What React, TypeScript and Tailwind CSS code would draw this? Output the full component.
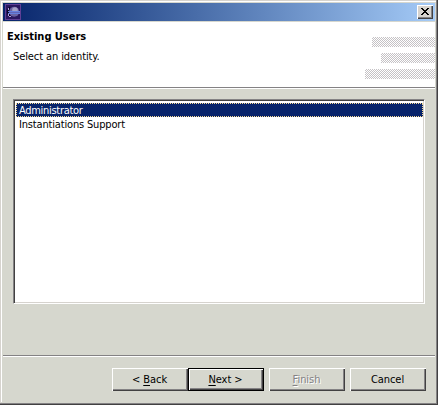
import type { ReactNode } from "react";

const face = "font-['DejaVu_Sans_Condensed','DejaVu_Sans',sans-serif] [font-stretch:condensed]";

function EclipseIcon() {
  return (
    <svg width="16" height="16" viewBox="0 0 16 16">
      <rect width="16" height="16" fill="#5f3f95" />
      <rect x="1" y="1" width="14" height="14" fill="#2a1860" />
      <path d="M5 2.5C2.5 4 2 6 2 8s1 4.500 4 5.500L5 10V5z" fill="#0a0628" />
      <circle cx="9.200" cy="7.800" r="5" fill="#6a63a0" />
      <circle cx="10" cy="6" r="2.800" fill="#a5a1c6" />
      <path d="M3 4h1v2H3zM3 10h1v2H3zM4 12h2v1H4z" fill="#b49ddd" />
      <path d="M3 7h12v1H3zM3 9h12v1H3z" fill="#6680dd" />
      <path d="M4 8h11v1H4z" fill="#6265b5" />
    </svg>
  );
}

function Dither({ className }: { className: string }) {
  return (
    <div
      className={`h-[10px] bg-[repeating-conic-gradient(#c5c2c5_0_25%,#ffffff_0_50%)] bg-[length:2px_2px] ${className}`}
    />
  );
}

function DialogButton({
  children,
  primary = false,
  disabled = false,
  className = "",
}: {
  children: ReactNode;
  primary?: boolean;
  disabled?: boolean;
  className?: string;
}) {
  const frame = primary
    ? "border border-black shadow-[inset_1px_1px_#fff,inset_-1px_-1px_#424142,inset_-2px_-2px_#848284]"
    : "shadow-[inset_1px_1px_#fff,inset_-1px_-1px_#424142,inset_-2px_-2px_#848284]";
  return (
    <button
      disabled={disabled}
      className={`flex h-[23px] w-[76px] shrink-0 items-center justify-center pr-px tracking-[-0.05px] whitespace-nowrap ${frame} ${
        disabled ? "text-[#848284] [text-shadow:1px_1px_#fff]" : "text-black"
      } ${className}`}
    >
      {children}
    </button>
  );
}

function Key({ children }: { children: string }) {
  return <span className="underline decoration-1 underline-offset-[2px]">{children}</span>;
}

export default function App() {
  return (
    <div
      className={`flex h-[405px] w-[438px] flex-col overflow-hidden bg-[#d6d7ce] p-[3px] text-[11px] leading-[14px] text-black shadow-[inset_-1px_-1px_#424142,inset_-2px_-2px_#848284,inset_2px_2px_#d6d3ce] ${face}`}
    >
      <div className="-mt-[2px] -ml-[2px] mr-[-1px] flex h-[401px] flex-col border-t border-l border-white pt-px pl-px">
        <header className="flex h-[18px] w-[432px] shrink-0 items-center justify-between bg-linear-to-r from-[#08246b] to-[#a5cbf7] pr-[2px] pl-[2px]">
          <EclipseIcon />
          <button className="flex h-[14px] w-[16px] items-center justify-center bg-[#d6d3ce] shadow-[inset_1px_1px_#fff,inset_-1px_-1px_#424142,inset_-2px_-2px_#848284]">
            <svg width="8" height="7" viewBox="0 0 8 7" shapeRendering="crispEdges" className="-mt-px">
              <path
                d="M0 0h2v1h1v1h2V1h1V0h2v1H7v1H6v1H5v1h1v1h1v1h1v1H6V6H5V5H3v1H2v1H0V6h1V5h1V4h1V3H2V2H1V1H0z"
                fill="#000"
              />
            </svg>
          </button>
        </header>
        <section className="mt-px flex h-[67px] w-[432px] shrink-0 justify-between border-b border-white bg-white shadow-[inset_0_-1px_#848284]">
          <div className="pt-[8px] pl-[4px]">
            <h1 className="font-bold tracking-[-0.03px]">Existing Users</h1>
            <p className="mt-[6px] ml-[6px] tracking-[-0.1px]">Select an identity.</p>
          </div>
          <div className="flex flex-col items-end gap-[6px] pt-[15px]">
            <Dither className="w-[63px]" />
            <Dither className="w-[54px]" />
            <Dither className="w-[70px]" />
          </div>
        </section>
        <ul className="mt-[10px] ml-[10px] h-[205px] w-[412px] shrink-0 border border-t-[#848284] border-r-white border-b-white border-l-[#848284] bg-white pt-[3px] pr-px pl-[2px] shadow-[inset_1px_1px_#424142,inset_-1px_-1px_#d6d3ce]">
          <li className="h-[14px] border border-dotted border-[#f7db94] bg-[#08246b] pt-px pl-[2px] leading-[12px] tracking-[-0.3px] text-white">
            Administrator
          </li>
          <li className="h-[14px] pt-px pl-[3px] tracking-[-0.17px]">Instantiations Support</li>
        </ul>
        <footer className="mt-[51px] flex w-[432px] shrink-0 border-t border-[#848284] pt-[12px] pl-[109px] shadow-[inset_0_1px_#fff]">
          <DialogButton>
            <span>
              &lt; <Key>B</Key>ack
            </span>
          </DialogButton>
          <DialogButton primary>
            <span>
              <Key>N</Key>ext &gt;
            </span>
          </DialogButton>
          <DialogButton disabled className="ml-[5px]">
            <span>
              <Key>F</Key>inish
            </span>
          </DialogButton>
          <DialogButton className="ml-[5px]">Cancel</DialogButton>
        </footer>
      </div>
    </div>
  );
}
